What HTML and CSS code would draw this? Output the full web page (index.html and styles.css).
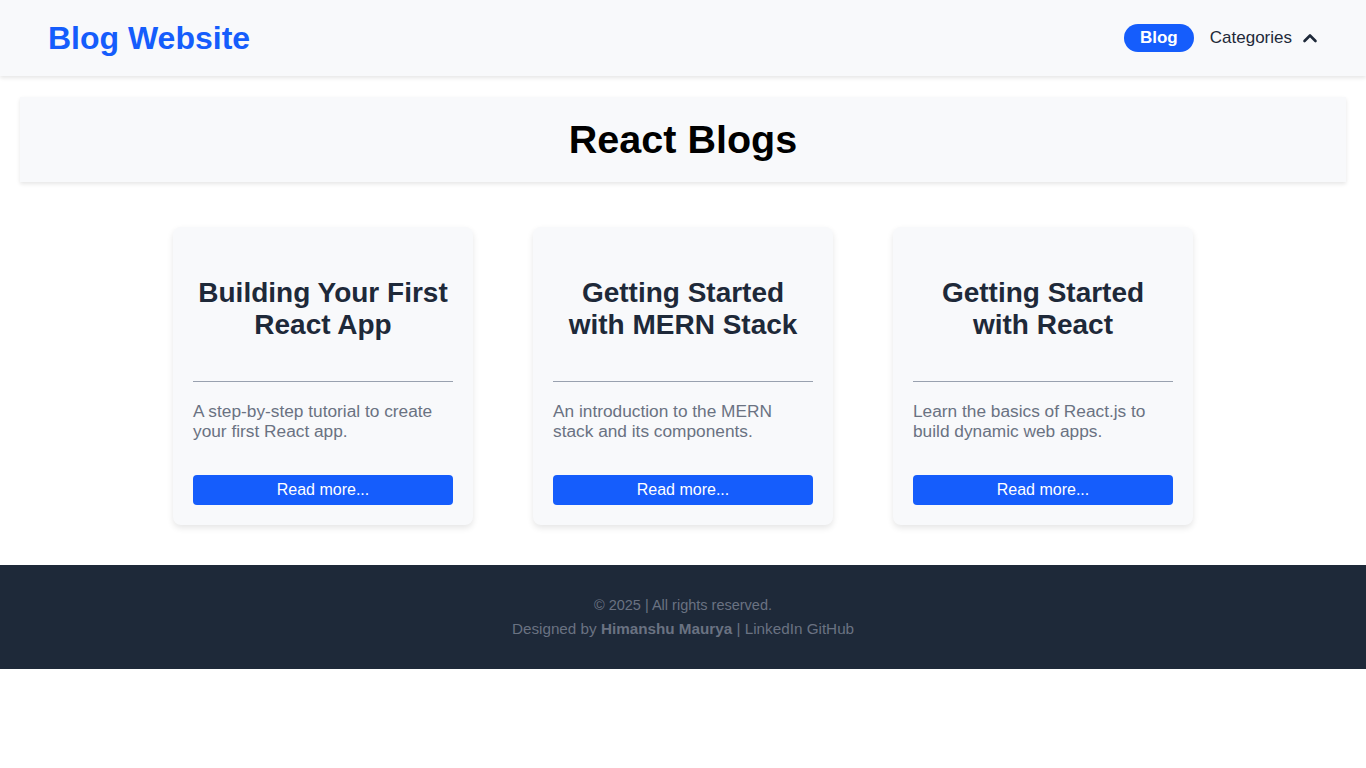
FILE: index.html
```html
<!DOCTYPE html>
<html lang="en">
<head>
<meta charset="utf-8">
<title>Blog Website</title>
<link rel="stylesheet" href="styles.css">
</head>
<body>
<header class="site-header">
  <a class="brand" href="#">Blog Website</a>
  <nav class="nav">
    <a class="nav-pill" href="#">Blog</a>
    <button class="nav-dropdown" type="button">Categories
      <svg class="chev" width="16" height="16" viewBox="0 0 16 16" aria-hidden="true"><path d="M2.5 11 L8 5.5 L13.5 11" fill="none" stroke="currentColor" stroke-width="2.6" stroke-linecap="round" stroke-linejoin="round"/></svg>
    </button>
  </nav>
</header>

<section class="hero">
  <h1>React Blogs</h1>
</section>

<main class="cards">
  <article class="card">
    <h2 class="card-title">Building Your First React App</h2>
    <hr class="card-rule">
    <p class="card-desc">A step-by-step tutorial to create your first React app.</p>
    <a class="card-btn" href="#">Read more...</a>
  </article>
  <article class="card">
    <h2 class="card-title">Getting Started with MERN Stack</h2>
    <hr class="card-rule">
    <p class="card-desc">An introduction to the MERN stack and its components.</p>
    <a class="card-btn" href="#">Read more...</a>
  </article>
  <article class="card">
    <h2 class="card-title">Getting Started with React</h2>
    <hr class="card-rule">
    <p class="card-desc">Learn the basics of React.js to build dynamic web apps.</p>
    <a class="card-btn" href="#">Read more...</a>
  </article>
</main>

<footer class="site-footer">
  <p class="foot-line foot-copy">© 2025 | All rights reserved.</p>
  <p class="foot-line foot-credit">Designed by <strong>Himanshu Maurya</strong> | <a href="#">LinkedIn</a> <a href="#">GitHub</a></p>
</footer>
</body>
</html>
```

FILE: styles.css
```css
* { box-sizing: border-box; }
html, body { margin: 0; padding: 0; }
body {
  font-family: "Liberation Sans", Arial, sans-serif;
  background: #ffffff;
  color: #1e2939;
}
a { text-decoration: none; color: inherit; }

.site-header {
  height: 76px;
  background: #f8f9fb;
  box-shadow: 0 2px 4px rgba(0,0,0,0.10);
  display: flex;
  align-items: center;
  justify-content: space-between;
  padding: 0 48px 0 48px;
  position: relative;
  z-index: 1;
}
.brand {
  color: #155dfc;
  font-weight: 700;
  font-size: 32px;
  margin-top: 1px;
}
.nav {
  display: flex;
  align-items: center;
  gap: 16px;
}
.nav-pill {
  background: #155dfc;
  color: #fff;
  font-weight: 700;
  font-size: 17px;
  height: 28px;
  width: 70px;
  border-radius: 14px;
  display: flex;
  align-items: center;
  justify-content: center;
}
.nav-dropdown {
  font: inherit;
  font-size: 17px;
  color: #1e2939;
  background: none;
  border: 0;
  padding: 0;
  display: flex;
  align-items: center;
  gap: 10px;
  cursor: pointer;
}
.chev { display: block; }

.hero {
  margin: 21px 20px 0;
  height: 85px;
  background: #f8f9fb;
  box-shadow: 0 2px 4px rgba(0,0,0,0.10);
  display: flex;
  align-items: center;
  justify-content: center;
}
.hero h1 {
  margin: 0;
  font-size: 39.5px;
  font-weight: 700;
  color: #000;
}

.cards {
  display: flex;
  justify-content: center;
  gap: 60px;
  padding: 45px 0 40px;
}
.card {
  width: 300px;
  background: #f8f9fb;
  border-radius: 8px;
  box-shadow: 0 3px 6px rgba(0,0,0,0.10);
  padding: 20px;
  display: flex;
  flex-direction: column;
}
.card-title {
  margin: 30px 0 0;
  font-size: 28px;
  line-height: 32px;
  font-weight: 700;
  text-align: center;
  color: #1e2939;
  min-height: 64px;
}
.card-rule {
  margin: 40px 0 0;
  border: 0;
  border-top: 1px solid #99a1af;
  height: 0;
}
.card-desc {
  margin: 19px 0 0;
  font-size: 17.3px;
  line-height: 20px;
  color: #6a7282;
  min-height: 40px;
}
.card-btn {
  margin-top: 34px;
  height: 30px;
  background: #155dfc;
  color: #fff;
  border-radius: 4px;
  font-size: 16px;
  display: flex;
  align-items: center;
  justify-content: center;
}

.site-footer {
  background: #1e2939;
  color: #6a7282;
  text-align: center;
  padding: 30px 0;
}
.foot-line {
  margin: 0;
  line-height: 20px;
}
.foot-copy { font-size: 14.5px; }
.foot-credit { font-size: 15.25px; margin-top: 4px; }
.foot-line strong { font-weight: 700; }
```
